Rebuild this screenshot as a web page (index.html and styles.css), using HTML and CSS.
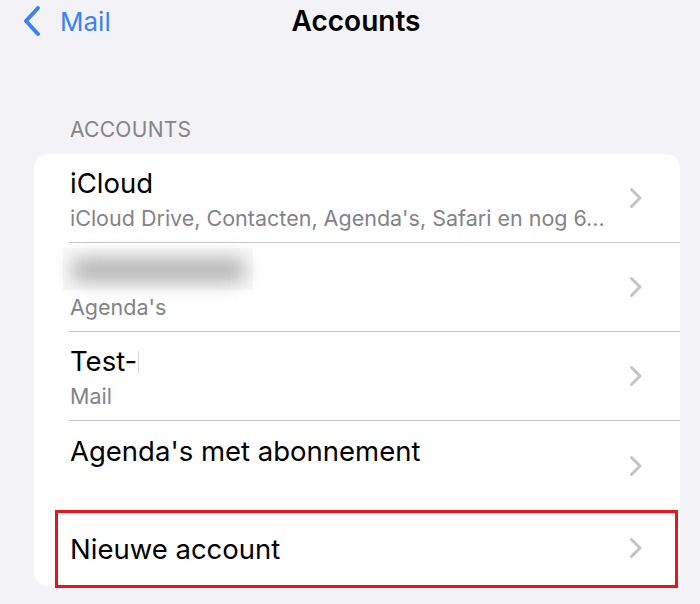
FILE: index.html
```html
<!DOCTYPE html>
<html lang="nl">
<head>
<meta charset="utf-8">
<title>Accounts</title>
<link rel="stylesheet" href="styles.css">
</head>
<body>
<header class="nav">
  <a class="back" href="#">
    <svg class="back-icon" width="20" height="32" viewBox="0 0 20 32"><polyline points="16,3 4,16 16,29" fill="none" stroke="#3a82f7" stroke-width="4" stroke-linecap="round" stroke-linejoin="round"/></svg>
    <span class="back-label">Mail</span>
  </a>
  <h1 class="title">Accounts</h1>
  <span></span>
</header>

<div class="section-header">ACCOUNTS</div>

<ul class="card">
  <li class="row">
    <div class="row-inner">
      <div class="text">
        <div class="row-title">iCloud</div>
        <div class="row-sub">iCloud Drive, Contacten, Agenda's, Safari en nog 6...</div>
      </div>
      <svg class="chev" width="14" height="22" viewBox="0 0 14 22"><polyline points="2.5,2.5 11,11 2.5,19.5" fill="none" stroke="#c4c4c7" stroke-width="3" stroke-linecap="round" stroke-linejoin="round"/></svg>
    </div>
  </li>
  <li class="row">
    <div class="row-inner">
      <div class="text">
        <div class="row-title blurred"><span class="blob"></span></div>
        <div class="row-sub">Agenda's</div>
      </div>
      <svg class="chev" width="14" height="22" viewBox="0 0 14 22"><polyline points="2.5,2.5 11,11 2.5,19.5" fill="none" stroke="#c4c4c7" stroke-width="3" stroke-linecap="round" stroke-linejoin="round"/></svg>
    </div>
  </li>
  <li class="row">
    <div class="row-inner">
      <div class="text">
        <div class="row-title">Test-<span class="caret"></span></div>
        <div class="row-sub">Mail</div>
      </div>
      <svg class="chev" width="14" height="22" viewBox="0 0 14 22"><polyline points="2.5,2.5 11,11 2.5,19.5" fill="none" stroke="#c4c4c7" stroke-width="3" stroke-linecap="round" stroke-linejoin="round"/></svg>
    </div>
  </li>
  <li class="row">
    <div class="row-inner last">
      <div class="text">
        <div class="row-title">Agenda's met abonnement</div>
        <div class="row-sub">&nbsp;</div>
      </div>
      <svg class="chev" width="14" height="22" viewBox="0 0 14 22"><polyline points="2.5,2.5 11,11 2.5,19.5" fill="none" stroke="#c4c4c7" stroke-width="3" stroke-linecap="round" stroke-linejoin="round"/></svg>
    </div>
  </li>
  <li class="row row-new">
    <div class="row-inner last single">
      <div class="text">
        <div class="row-title">Nieuwe account</div>
      </div>
      <svg class="chev" width="14" height="22" viewBox="0 0 14 22"><polyline points="2.5,2.5 11,11 2.5,19.5" fill="none" stroke="#c4c4c7" stroke-width="3" stroke-linecap="round" stroke-linejoin="round"/></svg>
    </div>
    <span class="highlight"></span>
  </li>
</ul>
</body>
</html>
```
FILE: styles.css
```css
* { box-sizing: border-box; }
html, body { margin: 0; padding: 0; }
body {
  background: #f2f2f7;
  font-family: Inter, "Noto Sans", sans-serif;
  color: #000;
  width: 700px;
  height: 604px;
  overflow: hidden;
}
.nav {
  display: grid;
  grid-template-columns: 1fr auto 1fr;
  align-items: center;
  height: 42px;
  padding: 0 20px 0 22px;
}
.back {
  display: flex;
  align-items: center;
  gap: 18px;
  text-decoration: none;
  color: #3a82f7;
}
.back-label {
  font-size: 26px;
  font-weight: 400;
}
.title {
  margin: 0 0 0 10px;
  font-size: 28px;
  font-weight: 600;
}
.section-header {
  margin-top: 75px;
  padding-left: 70px;
  font-size: 21px;
  color: #848489;
  line-height: 26px;
  letter-spacing: 0.3px;
}
.card {
  list-style: none;
  margin: 11px 20px 0 34px;
  padding: 0;
  background: #fff;
  border-radius: 14px;
}
.row {
  position: relative;
  padding-left: 35px;
}
.row-inner {
  display: flex;
  align-items: center;
  height: 89px;
  border-bottom: 1px solid #c8c7cc;
  padding-right: 37px;
}
.row-inner.last { border-bottom: none; }
.row-inner.single { height: 76px; }
.text {
  flex: 1;
  min-width: 0;
  padding-left: 1px;
  padding-top: 3px;
}
.row-inner.single .text { padding-top: 1px; }
.row-title {
  font-size: 27.5px;
  line-height: 36px;
  white-space: nowrap;
}
.row-sub {
  font-size: 21.5px;
  line-height: 32px;
  margin-top: 1px;
  color: #838388;
  white-space: nowrap;
  overflow: hidden;
  text-overflow: ellipsis;
}
.chev { flex: none; margin-left: 14px; }
.blurred {
  position: relative;
  height: 42px;
  margin-left: -7px;
  width: 190px;
  margin-top: -6px;
  background: #f8f8f8;
}
.blob {
  position: absolute;
  left: 8px;
  top: 10px;
  width: 175px;
  height: 24px;
  border-radius: 12px;
  background: #b5b5b5;
  filter: blur(9px);
}
.caret {
  display: inline-block;
  width: 1px;
  height: 22px;
  background: #d8d8d8;
  vertical-align: -2px;
  margin-left: 1px;
}
.highlight {
  position: absolute;
  left: 21px;
  right: 2px;
  top: 0;
  bottom: -2px;
  border: 3px solid #e8151f;
  pointer-events: none;
}
```
